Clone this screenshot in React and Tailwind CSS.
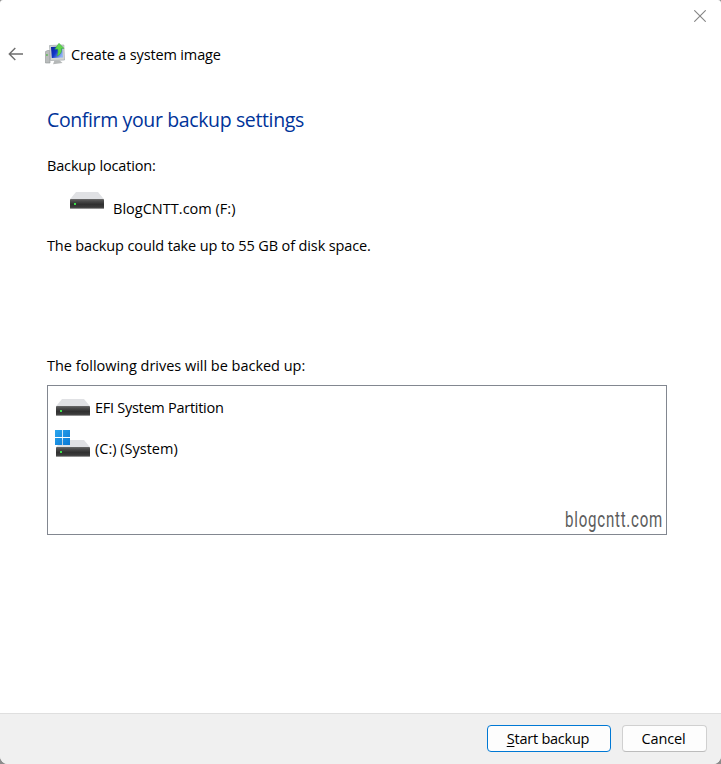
import React from "react";

function DriveIcon({ id }) {
  return (
    <svg width="34" height="17" viewBox="0 0 34 17" className="block shrink-0">
      <defs>
        <linearGradient id={id} x1="0" y1="0" x2="0" y2="1">
          <stop offset="0" stopColor="#6a6a6a" />
          <stop offset="0.2" stopColor="#4c4c4c" />
          <stop offset="0.55" stopColor="#303030" />
          <stop offset="0.85" stopColor="#3c3c3c" />
          <stop offset="1" stopColor="#777777" />
        </linearGradient>
      </defs>
      <path d="M6 0H28L34 7.2H0Z" fill="#e0e1e4" />
      <rect x="0" y="7" width="34" height="9.8" rx="0.4" fill={`url(#${id})`} />
      <rect x="4" y="11" width="2" height="2" fill="#3fe04a" />
    </svg>
  );
}

function WindowsLogo() {
  return (
    <svg width="15" height="15" viewBox="0 0 15 15" className="block">
      <defs>
        <linearGradient id="winblue" x1="0" y1="0" x2="1" y2="1">
          <stop offset="0" stopColor="#2ba6ee" />
          <stop offset="1" stopColor="#0a78d4" />
        </linearGradient>
      </defs>
      <path d="M0 0H7.1V7.1H0ZM7.9 0H15V7.1H7.9ZM0 7.9H7.1V15H0ZM7.9 7.9H15V15H7.9Z" fill="url(#winblue)" />
    </svg>
  );
}

function SystemImageIcon() {
  return (
    <svg width="20" height="22" viewBox="0 0 20 22" className="block shrink-0">
      <defs>
        <linearGradient id="screen" x1="0" y1="0" x2="1" y2="0.6">
          <stop offset="0" stopColor="#0a1f9c" />
          <stop offset="0.5" stopColor="#1238c8" />
          <stop offset="1" stopColor="#8fb2f4" />
        </linearGradient>
      </defs>
      <path d="M0.5 8.5L2.5 7.5H5V20H0.5Z" fill="#b9bcbc" stroke="#8f9494" strokeWidth="0.6" />
      <rect x="1.3" y="11" width="1.3" height="2" fill="#59b84c" />
      <path d="M4.5 2.5L18.8 2L19.5 17L5.5 17.5Z" fill="#d3d6d4" stroke="#a2a8aa" strokeWidth="0.7" />
      <path d="M6 4L17.2 3.6L18 14.6L6.8 15Z" fill="url(#screen)" />
      <path d="M9.5 17.3H14.5L17.5 20L8 21.2Z" fill="#b5b8b8" />
      <path d="M14 0.3L19 5.4L16.4 5.6C17 9 15.6 11.6 12 13C13.4 10.2 13.2 8 12.6 6L9.8 6.2Z" fill="#62d64e" stroke="#35ab37" strokeWidth="0.5" />
    </svg>
  );
}

export default function App() {
  return (
    <div className="h-[764px] w-[721px] overflow-hidden bg-[#8c8c8c]">
      <main className="flex h-full w-full flex-col overflow-hidden rounded-t-[3px] rounded-b-lg bg-white font-['Open_Sans','Noto_Sans',sans-serif] text-[14.5px] leading-5 text-black">
        <div className="flex h-8 justify-end pr-[15px] pt-[10px]">
          <svg width="12" height="12" viewBox="0 0 12 12">
            <path d="M0.3 0.3L11.7 11.7M11.7 0.3L0.3 11.7" stroke="#858585" strokeWidth="1.1" />
          </svg>
        </div>
        <header className="flex h-11 items-center pl-2">
          <svg width="16" height="14" viewBox="0 0 16 14" fill="none" stroke="#6e6e6e" strokeWidth="1.4">
            <path d="M15 7H1.5M7.3 1L1.3 7L7.3 13" />
          </svg>
          <div className="ml-[21px]">
            <SystemImageIcon />
          </div>
          <span className="ml-[6px] mt-[2px] tracking-[-0.15px]">Create a system image</span>
        </header>
        <section className="flex grow flex-col pl-[47px] pr-[54px]">
          <h1 className="mt-[30px] whitespace-nowrap text-[19.5px] leading-7 tracking-[-0.37px] text-[#003399]">Confirm your backup settings</h1>
          <p className="mt-[22px] tracking-[-0.16px]">Backup location:</p>
          <div className="mt-[16px] flex h-[27px] pl-[23px]">
            <DriveIcon id="drive-f" />
            <span className="ml-[9px] mt-[7px] tracking-[0.02px]">BlogCNTT.com (F:)</span>
          </div>
          <p className="mt-[17px] tracking-[-0.12px]">The backup could take up to 55 GB of disk space.</p>
          <p className="mt-[100px] tracking-[-0.02px]">The following drives will be backed up:</p>
          <div className="mt-[9px] flex h-[150px] flex-col border border-[#828790] pl-2">
            <div className="mt-[12px] flex h-5 items-start">
              <div className="mt-[1px]">
                <DriveIcon id="drive-efi" />
              </div>
              <span className="ml-[5px] tracking-[-0.27px]">EFI System Partition</span>
            </div>
            <div className="mt-[21px] flex h-5 items-start">
              <div className="relative mt-[1px]">
                <DriveIcon id="drive-c" />
                <div className="absolute -left-px -top-[10px]">
                  <WindowsLogo />
                </div>
              </div>
              <span className="ml-[5px]">(C:) (System)</span>
            </div>
            <div className="mt-auto mb-[2px] mr-[3px] flex h-6 justify-end">
              <span className="block origin-right scale-x-[0.7] font-[Roboto,sans-serif] text-[21.5px] leading-6 tracking-[1.1px] text-[#5c5c5c]">blogcntt.com</span>
            </div>
          </div>
        </section>
        <footer className="flex h-[51px] shrink-0 justify-end gap-[11px] border-t border-[#dfdfdf] bg-[#f0f0f0] pr-[14px] pt-[11px]">
          <button className="h-[27px] w-[124px] rounded-[4px] border border-[#0078d4] bg-[#fdfdfd] pl-[6px] pr-[8px] tracking-[-0.23px]">
            <span className="underline underline-offset-2">S</span>tart backup
          </button>
          <button className="h-[27px] w-[85px] rounded-[4px] border border-[#d0d0d0] border-b-[#bcbcbc] bg-[#fdfdfd] pl-[6px] pr-[8px] tracking-[-0.15px]">Cancel</button>
        </footer>
      </main>
    </div>
  );
}
